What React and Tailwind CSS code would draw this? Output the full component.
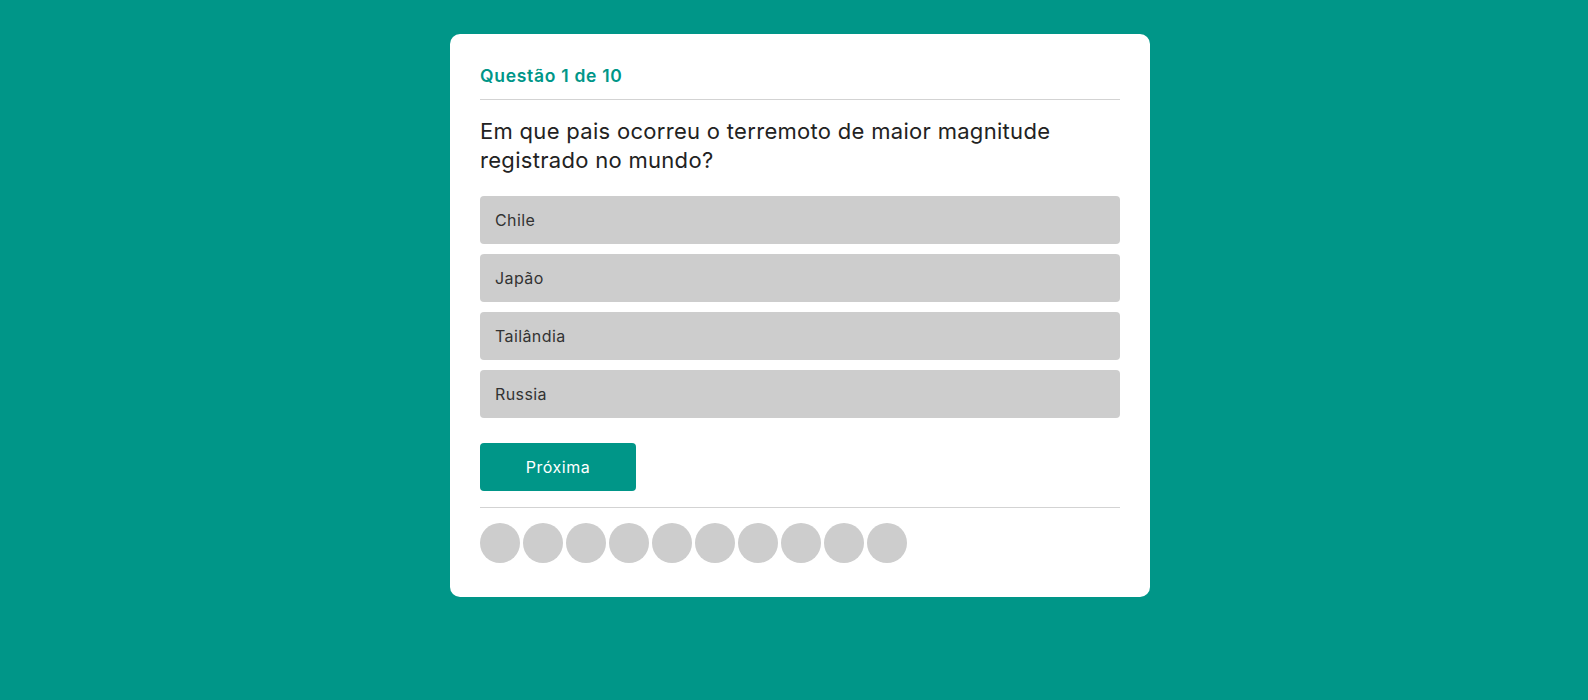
export default function App() {
  const options = ["Chile", "Japão", "Tailândia", "Russia"];
  return (
    <div className="min-h-[700px] w-full bg-[#009688] pl-3 pt-[34px] flex justify-center" style={{ fontFamily: "Inter, 'Noto Sans', sans-serif" }}>
      <div className="w-[700px] h-[563px] bg-white rounded-[10px] px-[30px] pt-[30px] flex flex-col">
        <div className="text-[17.5px] leading-[20px] font-semibold tracking-[0.7px] text-[#009688] pt-[2px] pb-[13px] border-b border-[#d3d3d3]">Questão 1 de 10</div>
        <h2 className="mt-[17px] text-[22px] leading-[29px] tracking-[0.3px] text-[#222] font-normal">
          Em que pais ocorreu o terremoto de maior magnitude registrado no mundo?
        </h2>
        <div className="mt-[21px] flex flex-col gap-[10px]">
          {options.map((o) => (
            <div key={o} className="h-[48px] rounded-[4px] bg-[#cdcdcd] px-[15px] flex items-center text-[16px] tracking-[0.4px] text-[#333]">{o}</div>
          ))}
        </div>
        <div className="mt-[25px] pb-[16px] border-b border-[#d3d3d3]">
          <button className="w-[156px] h-[48px] rounded-[4px] bg-[#009688] text-white text-[16px] tracking-[0.5px]">Próxima</button>
        </div>
        <div className="mt-[15px] flex gap-[3px]">
          {Array.from({ length: 10 }).map((_, i) => (
            <div key={i} className="w-[40px] h-[40px] rounded-full bg-[#cdcdcd]" />
          ))}
        </div>
      </div>
    </div>
  );
}
